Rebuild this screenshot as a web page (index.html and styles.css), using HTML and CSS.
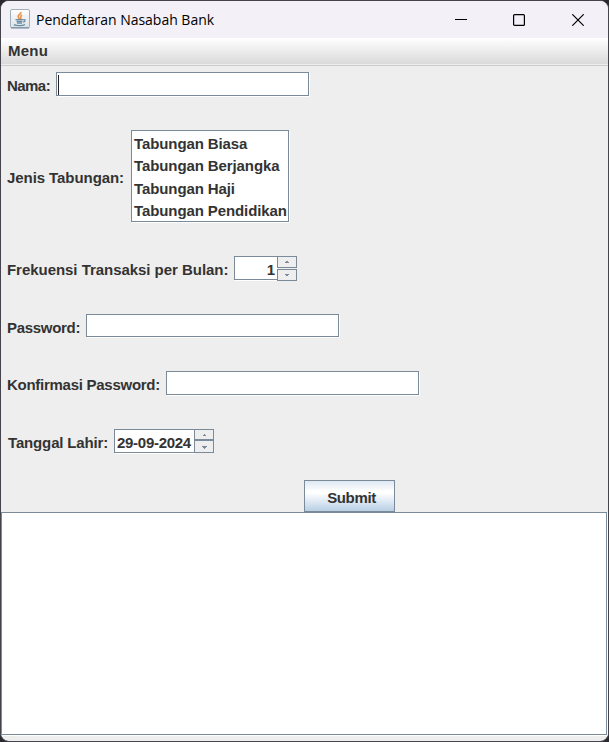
FILE: index.html
```html
<!DOCTYPE html>
<html lang="id">
<head>
<meta charset="utf-8">
<title>Pendaftaran Nasabah Bank</title>
<link rel="stylesheet" href="styles.css">
</head>
<body>
<div class="window">
  <header class="titlebar">
    <svg class="app-icon" width="20" height="20" viewBox="0 0 20 20">
      <defs><linearGradient id="tile" x1="0" y1="0" x2="0" y2="1"><stop offset="0" stop-color="#fff"/><stop offset="1" stop-color="#d9e1e6"/></linearGradient></defs>
      <rect x=".5" y=".5" width="19" height="18.5" rx="1.5" fill="url(#tile)" stroke="#a0afb9"/>
      <path d="M1 18.8H19" stroke="#6f8797"/>
      <path d="M11 3C11.5 5 7.4 6 8.2 8C8.6 9 9.5 9.3 9.4 10.4M12 6C9.6 7.2 11.6 8.5 10.4 10" fill="none" stroke="#ec9148" stroke-width="1.7"/>
      <path d="M5.5 10.6H13.2M6.5 12.5H12.3M7 14.2H12M13.4 10.8C16 10.2 15.4 12.8 13 13.2M4 15.6C6 17 13 17 15 15.5" fill="none" stroke="#6c8ca3" stroke-width="1.3"/>
    </svg>
    <h1 class="title">Pendaftaran Nasabah Bank</h1>
    <div class="controls">
      <svg width="12" height="12" viewBox="0 0 12 12"><path d="M0 5.5H12" stroke="#000"/></svg>
      <svg width="12" height="12" viewBox="0 0 12 12"><rect x=".6" y=".6" width="10.8" height="10.8" rx="1" fill="none" stroke="#000" stroke-width="1.2"/></svg>
      <svg width="12" height="12" viewBox="0 0 12 12"><path d="M.3.3L11.7 11.7M11.7.3L.3 11.7" stroke="#000" stroke-width="1.2"/></svg>
    </div>
  </header>
  <nav class="menubar"><span class="menu">Menu</span></nav>
  <main class="form">
    <div class="row row-name"><label class="label l-name">Nama:</label><div class="field"><span class="caret"></span></div></div>
    <div class="row row-type"><label class="label l-type">Jenis Tabungan:</label>
      <ul class="list"><li>Tabungan Biasa</li><li>Tabungan Berjangka</li><li>Tabungan Haji</li><li>Tabungan Pendidikan</li></ul>
    </div>
    <div class="row row-freq"><label class="label l-freq">Frekuensi Transaksi per Bulan:</label>
      <div class="spinner"><span class="value value-num">1</span><div class="steps">
        <span class="step"><svg width="4" height="2" viewBox="0 0 4 2"><path d="M1 0H3V1H4V2H0V1H1Z" fill="#7a8a99"/></svg></span>
        <span class="step"><svg width="4" height="2" viewBox="0 0 4 2"><path d="M0 0H4V1H3V2H1V1H0Z" fill="#7a8a99"/></svg></span>
      </div></div>
    </div>
    <div class="row row-pass"><label class="label l-pass">Password:</label><div class="field"></div></div>
    <div class="row row-conf"><label class="label l-conf">Konfirmasi Password:</label><div class="field"></div></div>
    <div class="row row-date"><label class="label l-date">Tanggal Lahir:</label>
      <div class="spinner"><span class="value value-date">29-09-2024</span><div class="steps steps-date">
        <span class="step"><svg width="3" height="2" viewBox="0 0 3 2"><path d="M1 0H2V1H3V2H0V1H1Z" fill="#7a8a99"/></svg></span>
        <span class="step"><svg class="down" width="5" height="3" viewBox="0 0 5 3"><path d="M0 0H5V1H4V2H3V3H2V2H1V1H0Z" fill="#7a8a99"/></svg></span>
      </div></div>
    </div>
    <button class="submit">Submit</button>
  </main>
  <div class="output"></div>
</div>
</body>
</html>
```
FILE: styles.css
```css
* { box-sizing: border-box; }
body {
  margin: 0;
  width: 609px;
  height: 742px;
  overflow: hidden;
  background: #29292f;
  color: #333;
  font: bold 15px/18px "Liberation Sans", Arial, sans-serif;
}
.window {
  display: flex;
  flex-direction: column;
  height: 742px;
  border: 1px solid #45434b;
  border-radius: 9px;
  overflow: hidden;
  background: #eee;
}
.titlebar {
  display: flex;
  align-items: center;
  height: 37px;
  flex: none;
  padding: 0 24px 0 9px;
  background: #f3f0f8;
}
.app-icon { margin-top: -1px; }
.title {
  margin: 1px 0 0 6px;
  color: #000;
  font: 14px/20px "Open Sans", sans-serif;
  letter-spacing: -0.02px;
}
.controls { display: flex; gap: 47px; margin-left: auto; }
.controls svg { display: block; }
.controls svg:first-child { margin-right: -1px; }
.menubar {
  height: 28px;
  flex: none;
  padding: 4px 7px;
  background: linear-gradient(#fff, #dadada 26px, #eee 26px, #eee 27px, #ccc 27px);
}
.menu { display: block; letter-spacing: 0.25px; }
.form { height: 446px; flex: none; padding: 6px 0 0 6px; }
.row { display: flex; align-items: flex-start; white-space: nowrap; }
.label { flex: none; }
.row-name { height: 58px; }
.row-type { height: 126px; }
.row-freq { height: 58px; }
.row-pass { height: 57px; }
.row-conf { height: 58px; }
.row-date { height: 51px; }
.l-name { width: 49px; padding-top: 5px; letter-spacing: -0.55px; }
.l-type { width: 124px; padding-top: 39px; letter-spacing: -0.07px; }
.l-freq { width: 227px; padding-top: 5px; letter-spacing: -0.04px; }
.l-pass { width: 79px; padding-top: 5px; letter-spacing: -0.3px; }
.l-conf { width: 159px; padding-top: 5px; letter-spacing: -0.27px; }
.l-date { width: 107px; padding: 5px 0 0 1px; letter-spacing: -0.15px; }
.field, .list {
  border: 1px solid #7a8a99;
  background: #fff;
  box-shadow: 1px 1px #fff;
}
.field { width: 253px; height: 24px; padding: 2px 1px; }
.row-pass .field { height: 23px; }
.caret { display: block; width: 1px; height: 20px; background: #222; }
.list {
  width: 158px;
  height: 92px;
  margin: 0;
  padding: 2px 0 0 2px;
  list-style: none;
  letter-spacing: -0.1px;
}
.list li { height: 22.3px; line-height: 22px; }
.spinner { display: flex; align-items: flex-start; }
.value {
  height: 24px;
  padding-top: 4px;
  border: 1px solid #7a8a99;
  border-right: 0;
  background: #fff;
  box-shadow: 1px 1px #fff;
}
.value-num { width: 43px; padding-right: 2px; text-align: right; }
.value-date { width: 80px; padding-left: 2px; letter-spacing: -0.28px; }
.steps { display: grid; gap: 1px; width: 20px; height: 25px; }
.steps-date { height: 24px; gap: 0; }
.steps-date svg { margin-left: 1px; }
.steps-date .down { margin-top: 1px; }
.step {
  display: flex;
  align-items: center;
  justify-content: center;
  border: 1px solid #7a8a99;
  background: #eee;
}
.submit {
  display: block;
  width: 91px;
  height: 32px;
  margin-left: 297px;
  padding: 4px 0 0 4px;
  border: 1px solid #7a8a99;
  border-radius: 0;
  background: linear-gradient(#dde8f3, #fff 35%, #fff 40%, #b8cfe5);
  color: #333;
  font: inherit;
  letter-spacing: -0.35px;
}
.output {
  width: 606px;
  height: 223px;
  flex: none;
  border: 1px solid #7a8a99;
  background: #fff;
  box-shadow: 1px 1px #fff;
}
```
